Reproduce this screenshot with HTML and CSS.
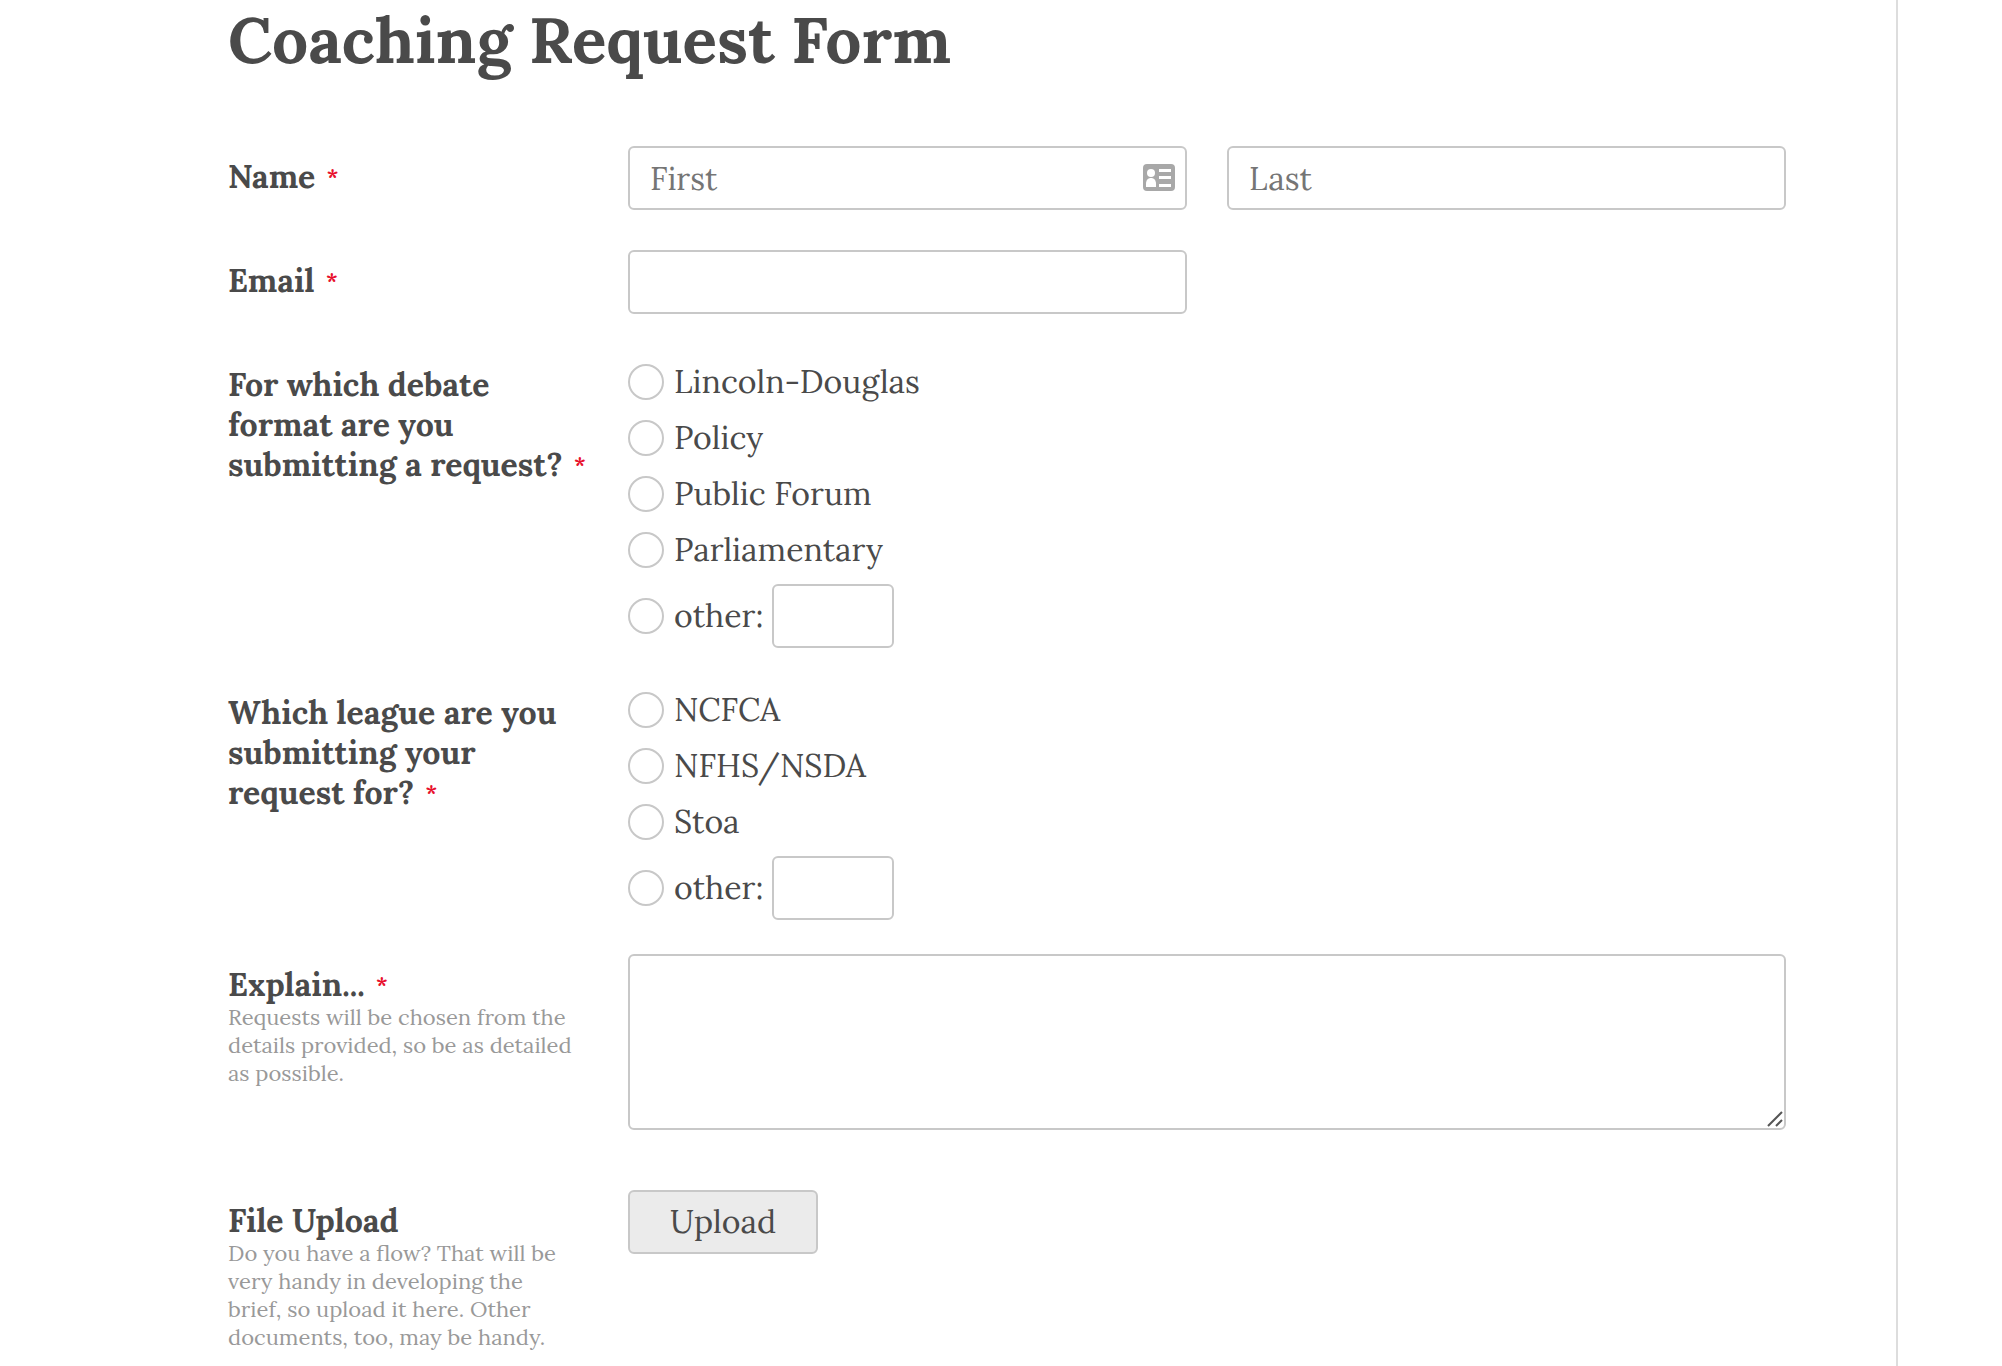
FILE: index.html
```html
<!DOCTYPE html>
<html lang="en">
<head>
    <meta charset="UTF-8">
    <meta name="viewport" content="width=device-width, initial-scale=1.0">
    <title>Coaching Request Form</title>
    <link rel="stylesheet" href="styles.css">
</head>
<body>
    <main class="page">
        <h1>Coaching Request Form</h1>

        <form id="coachingForm">
            <div class="form-row">
                <div class="label-col">
                    <label class="title" for="firstName">Name <span class="required">*</span></label>
                </div>
                <div class="two-col">
                    <div class="input-wrap">
                        <input type="text" class="field" id="firstName" name="firstName" placeholder="First" required>
                        <!-- contact card icon -->
                        <svg class="card-icon" viewBox="0 0 32 27" aria-hidden="true">
                            <rect width="32" height="27" rx="4" fill="#a8a8a8"/>
                            <circle cx="8" cy="9" r="4" fill="#fff"/>
                            <path d="M3 23v-3c0-4 2-6 5-6s5 2 5 6v3z" fill="#fff"/>
                            <path d="M16 5h12v3H16zM16 12h12v3H16zM16 20h12v3H16z" fill="#fff"/>
                        </svg>
                    </div>
                    <input type="text" class="field" id="lastName" name="lastName" placeholder="Last" aria-label="Last name" required>
                </div>
            </div>

            <div class="form-row">
                <div class="label-col">
                    <label class="title" for="email">Email <span class="required">*</span></label>
                </div>
                <div class="two-col">
                    <input type="email" class="field" id="email" name="email" required>
                </div>
            </div>

            <!-- Debate format -->
            <div class="form-row choices" role="radiogroup" aria-labelledby="formatTitle">
                <div class="label-col">
                    <div class="title" id="formatTitle">For which debate format are you submitting a request? <span class="required">*</span></div>
                </div>
                <div>
                    <label class="choice"><input type="radio" name="format" value="ld">Lincoln-Douglas</label>
                    <label class="choice"><input type="radio" name="format" value="policy">Policy</label>
                    <label class="choice"><input type="radio" name="format" value="pf">Public Forum</label>
                    <label class="choice"><input type="radio" name="format" value="parli">Parliamentary</label>
                    <div class="other">
                        <label class="choice"><input type="radio" name="format" value="other">other:</label>
                        <input type="text" class="field" name="formatOther" aria-label="Other format">
                    </div>
                </div>
            </div>

            <!-- League -->
            <div class="form-row choices" role="radiogroup" aria-labelledby="leagueTitle">
                <div class="label-col">
                    <div class="title" id="leagueTitle">Which league are you submitting your request for? <span class="required">*</span></div>
                </div>
                <div>
                    <label class="choice"><input type="radio" name="league" value="ncfca">NCFCA</label>
                    <label class="choice"><input type="radio" name="league" value="nsda">NFHS/NSDA</label>
                    <label class="choice"><input type="radio" name="league" value="stoa">Stoa</label>
                    <div class="other">
                        <label class="choice"><input type="radio" name="league" value="other">other:</label>
                        <input type="text" class="field" name="leagueOther" aria-label="Other league">
                    </div>
                </div>
            </div>

            <div class="form-row explain">
                <div class="label-col">
                    <label class="title" for="details">Explain... <span class="required">*</span></label>
                    <p class="help">Requests will be chosen from the details provided, so be as detailed as possible.</p>
                </div>
                <div class="input-wrap">
                    <textarea class="field" id="details" name="details" required></textarea>
                    <svg class="grip" viewBox="0 0 16 16" aria-hidden="true">
                        <path d="M1 15L15 1M9 15l6-6" stroke="#555" stroke-width="2" fill="none"/>
                    </svg>
                </div>
            </div>

            <div class="form-row">
                <div class="label-col">
                    <label class="title" for="upload">File Upload</label>
                    <p class="help">Do you have a flow? That will be very handy in developing the brief, so upload it here. Other documents, too, may be handy.</p>
                </div>
                <div>
                    <button type="button" class="upload" id="upload">Upload</button>
                </div>
            </div>
        </form>
    </main>
</body>
</html>
```
FILE: styles.css
```css
* {
    box-sizing: border-box;
}
body {
    margin: 0;
    background-color: #fff;
    color: #4a4a4a;
    font-family: Lora, "Liberation Serif", serif;
    font-size: 32px;
    line-height: 40px;
}
.page {
    min-height: 100vh;
    margin-right: 104px;
    padding: 0 110px 0 228px;
    border-right: 2px solid #ddd;
}
h1 {
    margin: 0 0 66px;
    font-size: 64px;
    line-height: 80px;
}
.form-row {
    display: grid;
    grid-template-columns: 360px 1fr;
    column-gap: 40px;
    margin-bottom: 40px;
}
.form-row.choices {
    margin-bottom: 34px;
}
.form-row.explain {
    margin-bottom: 60px;
}
.form-row:last-child {
    margin-bottom: 0;
}
.label-col {
    padding-top: 11px;
}
.title {
    display: block;
    font-weight: bold;
}
.required {
    margin-left: 3px;
    color: #e8112d;
    font-size: 22px;
    line-height: 22px;
    vertical-align: 4px;
}
.help {
    margin: -2px 0 0;
    padding-right: 10px;
    color: #999;
    font-size: 22px;
    line-height: 28px;
}
.two-col {
    display: grid;
    grid-template-columns: 1fr 1fr;
    gap: 40px;
}
.input-wrap {
    position: relative;
}
.field {
    display: block;
    width: 100%;
    height: 64px;
    padding: 0 20px;
    border: 2px solid #c8c8c8;
    border-radius: 6px;
    background-color: #fff;
    color: #4a4a4a;
    font: inherit;
}
.field::placeholder {
    color: #757575;
}
.card-icon {
    position: absolute;
    top: 18px;
    right: 12px;
    width: 32px;
    height: 27px;
}
textarea.field {
    height: 176px;
    padding: 10px 20px;
    resize: vertical;
}
textarea.field::-webkit-resizer {
    display: none;
}
.grip {
    position: absolute;
    right: 3px;
    bottom: 3px;
    width: 16px;
    height: 16px;
    pointer-events: none;
}
.choice {
    display: flex;
    align-items: center;
    gap: 10px;
    height: 56px;
}
.choice input {
    appearance: none;
    width: 36px;
    height: 36px;
    margin: 0;
    border: 2px solid #c8c8c8;
    border-radius: 50%;
    background-color: #fff;
}
.choice input:checked {
    background-color: #4a4a4a;
    box-shadow: inset 0 0 0 6px #fff;
}
.other {
    display: flex;
    align-items: center;
    gap: 9px;
    padding-top: 6px;
}
.other .field {
    width: 122px;
}
.upload {
    display: block;
    width: 190px;
    height: 64px;
    border: 2px solid #c8c8c8;
    border-radius: 6px;
    background-color: #ebebeb;
    color: #4a4a4a;
    font: inherit;
    cursor: pointer;
}
.upload:hover {
    background-color: #e0e0e0;
}
```
